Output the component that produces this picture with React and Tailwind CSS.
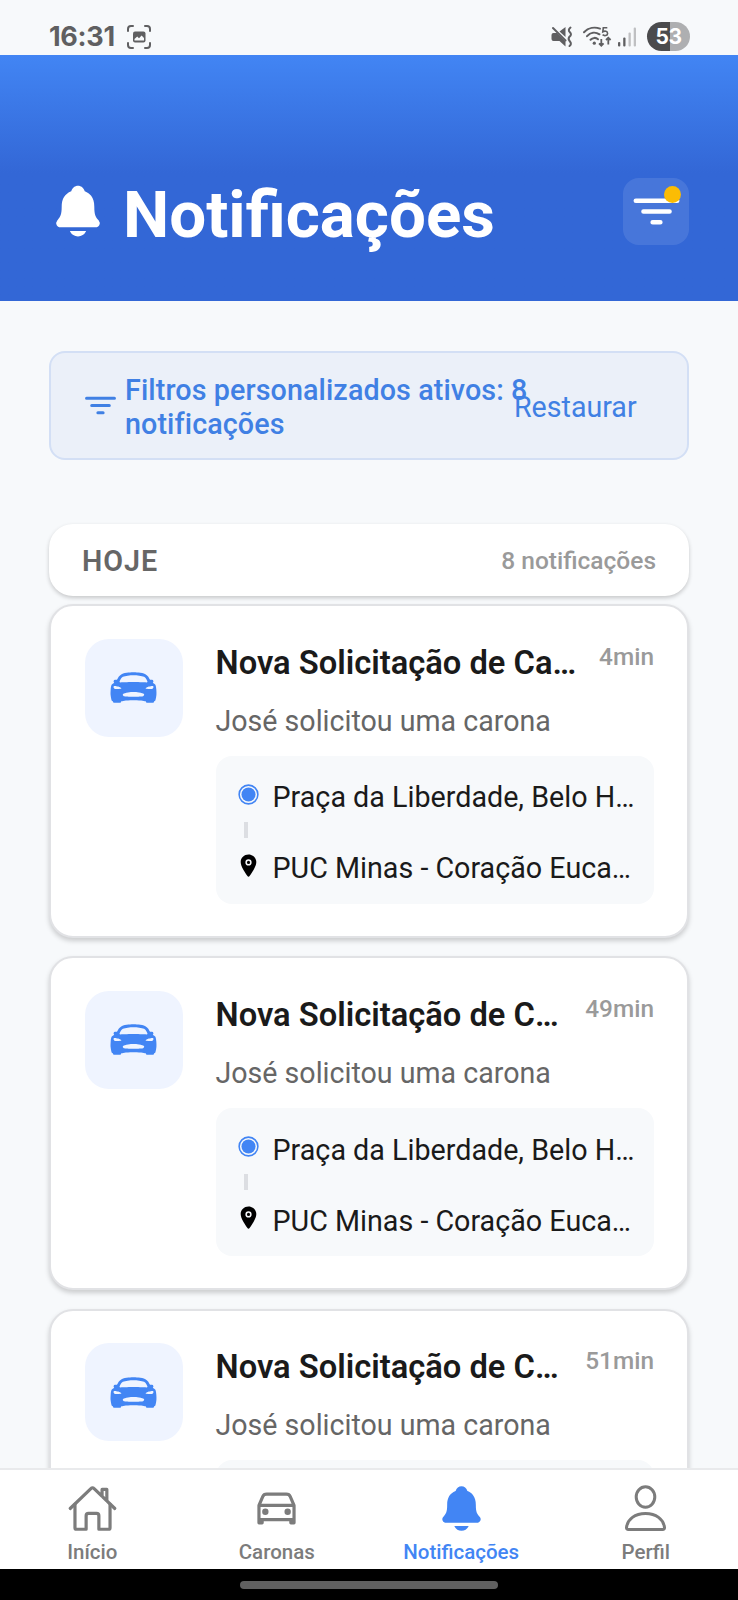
import React from "react";
import {
  IoNotifications,
  IoFilter,
  IoCarSport,
  IoRadioButtonOn,
  IoLocation,
  IoHomeOutline,
  IoCarOutline,
} from "react-icons/io5";

const notifications = [
  { id: 1, time: "4min" },
  { id: 2, time: "49min" },
  { id: 3, time: "51min" },
];

function CaptureIcon() {
  return (
    <svg width="26" height="26" viewBox="0 0 26 26" fill="none">
      <path
        d="M2 7V5a3 3 0 0 1 3-3h2M19 2h2a3 3 0 0 1 3 3v2M24 19v2a3 3 0 0 1-3 3h-2M7 24H5a3 3 0 0 1-3-3v-2"
        stroke="#5f5f61"
        strokeWidth="2"
        strokeLinecap="round"
      />
      <rect x="7" y="7.500" width="12.500" height="11" rx="2" fill="#5f5f61" />
      <path d="M8.500 16.500V15l2.700-2.400 1.800 1.600 2.600-2.700 2.400 2.500v2.500z" fill="#f7f9fb" />
    </svg>
  );
}

function MuteIcon() {
  return (
    <svg width="22" height="22" viewBox="0 0 22 22" fill="none">
      <path d="M.5 9a2 2 0 0 1 2-2h3.500L14.500 15.500v5L8.500 15H2.500a2 2 0 0 1-2-2z" fill="#5f5f61" />
      <path d="M14.500 1v10L8.500 5.500z" fill="#5f5f61" />
      <path d="M2 2 14.500 14.500" stroke="#5f5f61" strokeWidth="2" strokeLinecap="round" />
      <path
        d="M19.500 1.500q-3 2.400-.6 4.700t-.6 4.700q-1.600 2.200.6 4.600t-.4 4.500"
        stroke="#5f5f61"
        strokeWidth="2"
        strokeLinejoin="round"
        strokeLinecap="round"
      />
    </svg>
  );
}

function WifiIcon() {
  return (
    <svg width="30" height="22" viewBox="0 0 30 22" fill="none">
      <g stroke="#5f5f61" strokeWidth="2" strokeLinecap="round">
        <path d="M2 6.200C6.500 1.500 13 .8 18 2.600" />
        <path d="M5 10.200C8.500 6.200 13.500 5.800 17.500 8.300" />
        <path d="M8.500 13.800c2.200-2.400 5.500-2.500 7.500-.6" />
      </g>
      <circle cx="12.300" cy="17.200" r="1.600" fill="#5f5f61" />
      <path d="M25.300 1.800h-4l-.5 4c2-1.200 4.800-.6 4.800 1.600 0 2.300-3.300 2.900-5 1.300" stroke="#5f5f61" strokeWidth="1.600" />
      <path
        d="M19.300 13v6.500M17 17.400l2.300 2.300 2.300-2.300M26.300 18.500V12M24 14l2.300-2.300 2.300 2.300"
        stroke="#5f5f61"
        strokeWidth="1.800"
      />
    </svg>
  );
}

function SignalIcon() {
  return (
    <svg width="20" height="22" viewBox="0 0 20 22">
      <rect x="1" y="16" width="2.300" height="4.500" rx="1" fill="#5f5f61" />
      <rect x="6.200" y="11.500" width="2.300" height="9" rx="1" fill="#5f5f61" />
      <rect x="11.500" y="6.500" width="2.300" height="14" rx="1" fill="#bfc0c2" />
      <rect x="16.700" y="1.500" width="2.300" height="19" rx="1" fill="#bfc0c2" />
    </svg>
  );
}

function PersonIcon({ className }) {
  return (
    <svg viewBox="0 0 51 51" fill="none" stroke="currentColor" strokeWidth="3" className={className}>
      <ellipse cx="25.500" cy="14" rx="9.300" ry="10.200" />
      <path
        d="M25.500 30.500c-10.500 0-18 5.700-19 14-.1 1.100.7 2 1.800 2h34.400c1.100 0 1.900-.9 1.800-2-1-8.300-8.500-14-19-14z"
        strokeLinejoin="round"
      />
    </svg>
  );
}

function StatusBar() {
  return (
    <div className="flex h-[55px] shrink-0 items-start justify-between pr-[48px] pl-[49px] pt-[22px]">
      <div className="flex h-[29px] items-center gap-[11px]">
        <span className="font-['Inter',sans-serif] text-[27px] leading-none font-bold tracking-[-0.3px] text-[#5f5f61]">
          16:31
        </span>
        <CaptureIcon />
      </div>
      <div className="flex h-[29px] items-center">
        <MuteIcon />
        <div className="ml-[9px]">
          <WifiIcon />
        </div>
        <div className="ml-[5px]">
          <SignalIcon />
        </div>
        <div className="ml-[10px] flex h-[29px] w-[43px] items-center justify-center rounded-full bg-linear-to-r from-[#4b4b4d] from-53% to-[#aeafb1] to-53% font-['Inter',sans-serif] text-[21px] font-bold tracking-[-0.4px] text-white">
          53
        </div>
      </div>
    </div>
  );
}

function Header() {
  return (
    <header className="flex h-[246px] shrink-0 items-start justify-between bg-linear-to-b from-[#4285f4] to-[#3367d6] to-[118px] pr-[49px] pl-[49px] pt-[123px]">
      <div className="flex h-[70px] items-center">
        <IoNotifications className="-mt-[4px] size-[58px] text-white" />
        <h1 className="mt-[3px] ml-[16px] text-[65.500px] leading-[70px] font-bold text-white">Notificações</h1>
      </div>
      <button className="relative flex h-[67px] w-[66px] items-center justify-center rounded-[16px] bg-white/10">
        <IoFilter className="size-[49px] text-white" />
        <span className="absolute top-[8px] right-[8px] size-[17px] rounded-full bg-[#fbbc04]" />
      </button>
    </header>
  );
}

function FilterBanner() {
  return (
    <div className="mx-[49px] mt-[50px] flex h-[109px] items-center rounded-[16px] border-2 border-[#d3dff5] bg-[#ebf0f9] pl-[33px] text-[28.700px] leading-[33.500px] text-[#4080e4]">
      <IoFilter className="-mt-[1px] size-[33px] shrink-0" />
      <p className="mt-[4px] ml-[8px] w-[410px] shrink-0 font-medium tracking-[0.1px]">
        Filtros personalizados ativos: 8 notificações
      </p>
      <button className="mt-[4px] -ml-[21px] text-[28.600px]">Restaurar</button>
    </div>
  );
}

function NotificationCard({ time }) {
  return (
    <article className="flex h-[334px] items-start rounded-[24px] border-2 border-[#e1e2e5] bg-white pr-[33px] pl-[33.500px] pt-[32.500px] shadow-[0_3px_5px_rgba(0,0,0,0.18)]">
      <div className="flex size-[98px] shrink-0 items-center justify-center rounded-[24px] bg-[#eff4ff]">
        <IoCarSport className="size-[49px] text-[#4285f4]" />
      </div>
      <div className="ml-[33px] min-w-0 flex-1">
        <div className="flex items-start">
          <h2 className="mt-[2px] min-w-0 flex-1 truncate text-[32.700px] leading-[45px] font-semibold text-[#1a1a1a]">
            Nova Solicitação de Carona
          </h2>
          <span className="mt-[3px] ml-[16px] text-[24.400px] leading-[30px] font-medium text-[#9a9a9a]">{time}</span>
        </div>
        <p className="mt-[15px] text-[28.600px] leading-[41px] text-[#666]">José solicitou uma carona</p>
        <div className="mt-[14px] flex h-[148px] flex-col rounded-[16px] bg-[#f7f9fb] pt-[22px] pr-[16px] pl-[20.500px] text-[28.700px] text-[#1a1a1a]">
          <div className="flex h-[41px] shrink-0 items-center">
            <IoRadioButtonOn className="mb-[7px] size-[25px] shrink-0 text-[#4285f4]" />
            <span className="ml-[11.500px] truncate">Praça da Liberdade, Belo Horizonte</span>
          </div>
          <div className="mt-[3px] ml-[8px] h-[16px] w-[4px] shrink-0 bg-[#dcdee2]" />
          <div className="mt-[11px] flex h-[41px] shrink-0 items-center">
            <IoLocation className="mb-[7px] size-[25px] shrink-0 text-black" />
            <span className="ml-[11.500px] truncate">PUC Minas - Coração Eucarístico</span>
          </div>
        </div>
      </div>
    </article>
  );
}

function NavItem({ icon: Icon, label, active }) {
  return (
    <a className={"flex flex-1 flex-col items-center pt-[13px] " + (active ? "text-[#4285f4]" : "text-[#7c7c7c]")}>
      <Icon className="size-[51px]" />
      <span className="mt-[6px] text-[20.500px] leading-[24px] font-medium">{label}</span>
    </a>
  );
}

export default function App() {
  return (
    <div className="flex h-[1600px] w-[738px] flex-col overflow-hidden bg-[#f7f9fb] font-['Roboto',sans-serif]">
      <StatusBar />
      <Header />
      <main className="min-h-0 flex-1 overflow-hidden">
        <FilterBanner />
        <section className="mx-[49px] mt-[64px]">
          <div className="flex h-[72px] items-center justify-between rounded-[24px] bg-white px-[33px] pt-[3px] shadow-[0_2px_4px_rgba(0,0,0,0.2)]">
            <h3 className="text-[28.700px] font-semibold tracking-[1px] text-[#666]">HOJE</h3>
            <span className="text-[24.500px] font-medium text-[#9a9a9a]">8 notificações</span>
          </div>
          <div className="mt-[8px] flex flex-col gap-[18.300px]">
            {notifications.map((n) => (
              <NotificationCard key={n.id} time={n.time} />
            ))}
          </div>
        </section>
      </main>
      <nav className="flex h-[101px] shrink-0 border-t-2 border-[#e9eaec] bg-white">
        <NavItem icon={IoHomeOutline} label="Início" />
        <NavItem icon={IoCarOutline} label="Caronas" />
        <NavItem icon={IoNotifications} label="Notificações" active />
        <NavItem icon={PersonIcon} label="Perfil" />
      </nav>
      <div className="flex h-[31px] shrink-0 items-center justify-center bg-black">
        <div className="h-[8px] w-[258px] rounded-full bg-[#606060]" />
      </div>
    </div>
  );
}
